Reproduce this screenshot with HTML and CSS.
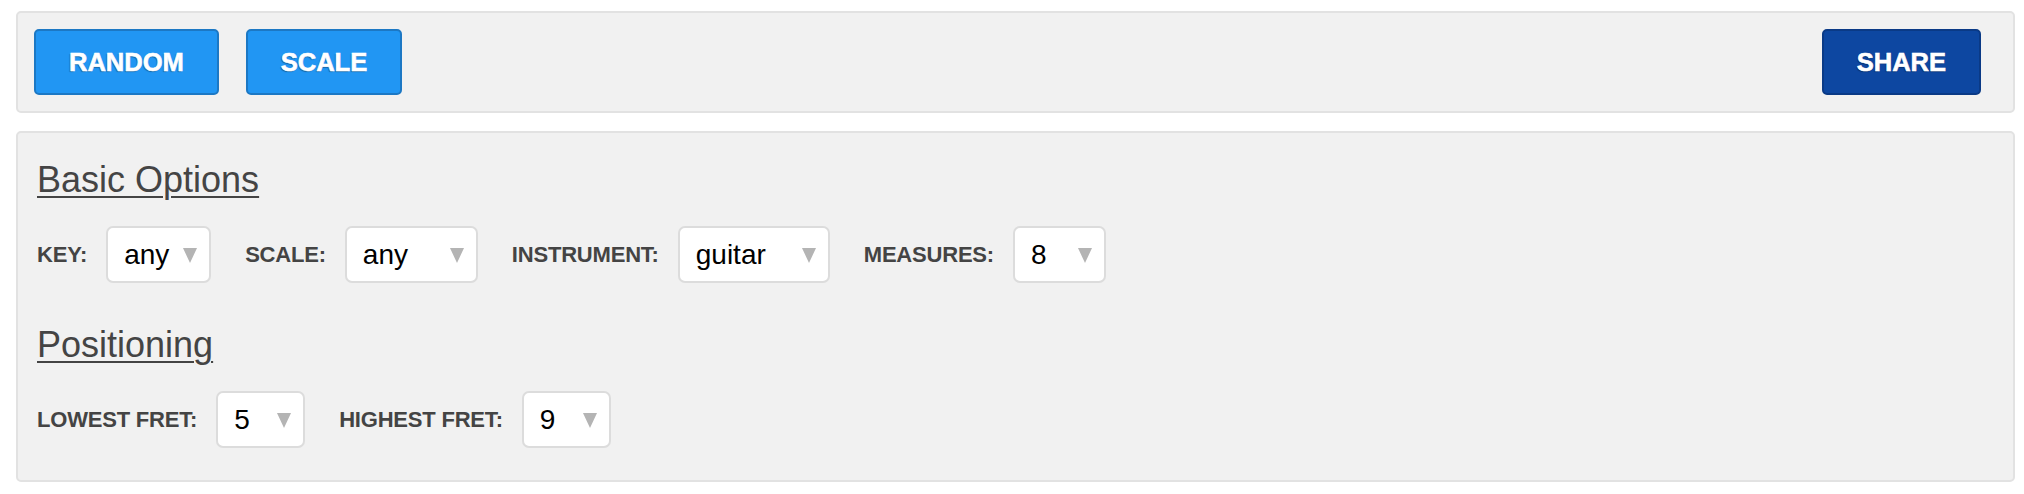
FILE: index.html
```html
<!DOCTYPE html>
<html lang="en">
<head>
<meta charset="utf-8">
<title>Scale Trainer</title>
<link rel="stylesheet" href="styles.css">
</head>
<body>
<div class="app">
  <div class="panel toolbar">
    <button class="btn btn-primary" type="button">RANDOM</button>
    <button class="btn btn-primary" type="button">SCALE</button>
    <button class="btn btn-dark btn-share" type="button">SHARE</button>
  </div>

  <div class="panel options">
    <h2 class="section-title">Basic Options</h2>
    <div class="row">
      <label class="field">
        <span class="field-label">KEY:</span>
        <span class="select select-key"><select><option>any</option><option>C</option><option>D</option></select></span>
      </label>
      <label class="field">
        <span class="field-label">SCALE:</span>
        <span class="select select-scale"><select><option>any</option><option>major</option><option>minor</option></select></span>
      </label>
      <label class="field">
        <span class="field-label">INSTRUMENT:</span>
        <span class="select select-instrument"><select><option>guitar</option><option>bass</option></select></span>
      </label>
      <label class="field">
        <span class="field-label">MEASURES:</span>
        <span class="select select-measures"><select><option>8</option><option>4</option><option>16</option></select></span>
      </label>
    </div>

    <h2 class="section-title section-title-second">Positioning</h2>
    <div class="row">
      <label class="field">
        <span class="field-label">LOWEST FRET:</span>
        <span class="select select-fret"><select><option>5</option><option>0</option></select></span>
      </label>
      <label class="field">
        <span class="field-label">HIGHEST FRET:</span>
        <span class="select select-fret"><select><option>9</option><option>12</option></select></span>
      </label>
    </div>
  </div>
</div>
</body>
</html>
```

FILE: styles.css
```css
html, body {
  margin: 0;
  padding: 0;
  background: #ffffff;
}

body {
  font-family: "Liberation Sans", Arial, sans-serif;
  color: #444444;
}

.app {
  padding: 11px 9px 0 16px;
}

.panel {
  background: #f1f1f1;
  border: 2px solid #e2e2e2;
  border-radius: 5px;
}

.toolbar {
  display: flex;
  align-items: center;
  gap: 27px;
  padding: 16px;
}

.btn {
  height: 66px;
  box-sizing: border-box;
  padding: 0 33px;
  border-radius: 5px;
  font-family: "Liberation Sans", Arial, sans-serif;
  font-weight: 700;
  font-size: 25.5px;
  color: #ffffff;
  -webkit-text-stroke: 0.6px #ffffff;
  text-shadow: -1px 1px 1px rgba(0, 0, 0, 0.35);
  cursor: pointer;
}

.btn-primary {
  background: #2196f3;
  border: 2px solid #1c78c4;
}

.btn-dark {
  background: #0d47a1;
  border: 2px solid #0a3a86;
}

.btn-share {
  margin-left: auto;
  margin-right: 16px;
}

.options {
  margin-top: 18px;
  padding: 26px 19px 32px;
}

.section-title {
  margin: 0;
  font-size: 36px;
  line-height: 41px;
  font-weight: 400;
  color: #444444;
  text-decoration: underline;
  text-decoration-thickness: 2px;
  text-underline-offset: 4px;
}

.section-title-second {
  margin-top: 41px;
}

.row {
  display: flex;
  align-items: center;
  gap: 34px;
  margin-top: 26px;
}

.field {
  display: flex;
  align-items: center;
  gap: 19px;
}

.field-label {
  font-size: 22px;
  font-weight: 700;
  color: #444444;
  letter-spacing: -0.2px;
}

.select {
  position: relative;
  display: block;
  height: 57px;
  box-sizing: border-box;
  background: #ffffff;
  border: 2px solid #dcdcdc;
  border-radius: 7px;
}

.select select {
  appearance: none;
  -webkit-appearance: none;
  width: 100%;
  height: 100%;
  margin: 0;
  padding: 0 0 0 16px;
  border: 0;
  background: transparent;
  font-family: "Liberation Sans", Arial, sans-serif;
  font-size: 28px;
  color: #000000;
  outline: none;
}

.select::after {
  content: "";
  position: absolute;
  right: 12px;
  top: 20px;
  width: 0;
  height: 0;
  border-left: 7px solid transparent;
  border-right: 7px solid transparent;
  border-top: 15px solid #b4b4b4;
  pointer-events: none;
}

.select-key { width: 105px; }
.select-scale { width: 133px; }
.select-instrument { width: 152px; }
.select-measures { width: 93px; }
.select-fret { width: 89px; }
```
